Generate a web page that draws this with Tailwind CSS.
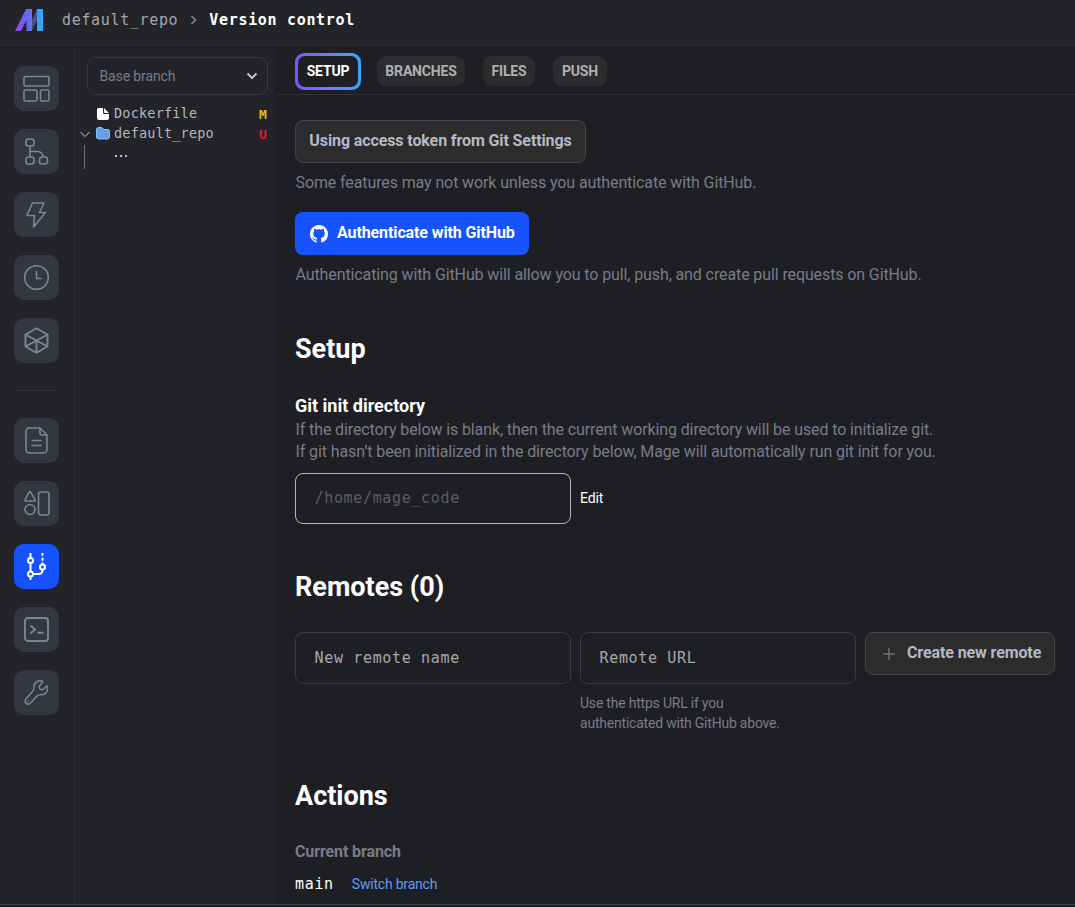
<!DOCTYPE html>
<html lang="en">
<head>
<meta charset="utf-8">
<title>Version control</title>
<script src="https://cdn.jsdelivr.net/npm/@tailwindcss/browser@4"></script>
</head>
<body class="bg-[#1e1f24] font-['Roboto',sans-serif] text-white">
<div class="flex h-[907px] w-[1075px] flex-col overflow-hidden">
  <header class="flex h-12 shrink-0 items-center border-b border-[#1b1c20] bg-[#232429] pb-[7px] pl-[15px] font-['DejaVu_Sans_Mono',monospace] text-[15px] leading-6 whitespace-nowrap">
    <svg class="h-[22px] w-[29px] shrink-0" viewBox="0 0 29 22">
      <defs><linearGradient id="logo" gradientUnits="userSpaceOnUse" x1="3" x2="26" y1="0" y2="0"><stop offset="0" stop-color="#8250ea"/><stop offset="0.4" stop-color="#7063f0"/><stop offset="1" stop-color="#2ea8fa"/></linearGradient></defs>
      <path d="M17 21 22 11V1l-5 11Z" fill="#46518c"/>
      <path d="M0 22 11 0h6v22h-5.500V11L6 22Z" fill="url(#logo)"/>
      <path d="M17 11 22 0v11l-5 10Z" fill="#46518c"/>
      <path d="M22 0h6v22h-6Z" fill="#32a5fa"/>
    </svg>
    <span class="ml-[18px] tracking-[0.66px] text-[#a5a6aa]">default_repo</span>
    <svg class="ml-[12px] h-3 w-2" viewBox="0 0 8 12" fill="none" stroke="#85868d" stroke-width="1.6"><path d="m1.500 2 4 4-4 4"/></svg>
    <span class="ml-[11px] font-bold tracking-[0.68px]">Version control</span>
  </header>

  <div class="flex min-h-0 flex-1">
    <nav class="flex w-[78px] shrink-0 flex-col gap-[18px] border-r border-[#1b1c20] bg-[#232429] pt-[18px] pl-[14px]">
      <div class="size-[45px] rounded-[10px] bg-[#35373e] p-[9px]"><svg class="size-[27px]" viewBox="0 0 27 27" fill="none" stroke="#82838f" stroke-width="1.6"><rect x="1" y="1.500" width="25" height="9.500" rx="1.500"/><rect x="1" y="15" width="13" height="11" rx="1.500"/><rect x="17.500" y="15" width="8.500" height="11" rx="1.500"/></svg></div>
      <div class="size-[45px] rounded-[10px] bg-[#35373e] p-[9px]"><svg class="size-[27px]" viewBox="0 0 27 27" fill="none" stroke="#82838f" stroke-width="1.6"><rect x="3" y="1" width="8" height="7" rx="2.500"/><rect x="3" y="19" width="8" height="7" rx="2.500"/><rect x="16.500" y="19" width="8" height="7" rx="2.500"/><path d="M7 8v11M7 13.500h8c3.500 0 4.500 2 5.500 5.500"/></svg></div>
      <div class="size-[45px] rounded-[10px] bg-[#35373e] p-[9px]"><svg class="size-[27px]" viewBox="0 0 27 27" fill="none" stroke="#82838f" stroke-width="1.6" stroke-linejoin="round"><path d="M9.500 2H21l-4.500 9.500h6L10.500 26l1-11.500H3.800Z"/></svg></div>
      <div class="size-[45px] rounded-[10px] bg-[#35373e] p-[9px]"><svg class="size-[27px]" viewBox="0 0 27 27" fill="none" stroke="#82838f" stroke-width="1.6" stroke-linecap="round"><circle cx="13.500" cy="13.500" r="11.800"/><path d="M13.500 7.500v7h4.500"/></svg></div>
      <div class="size-[45px] rounded-[10px] bg-[#35373e] p-[9px]"><svg class="size-[27px]" viewBox="0 0 27 27" fill="none" stroke="#82838f" stroke-width="1.9" stroke-linejoin="round"><path d="m13.500 1.200 11 6.300v12l-11 6.300-11-6.300v-12ZM2.500 7.500l22 12M24.500 7.500l-22 12M13.500 13.500V26"/></svg></div>
      <div class="mt-[9px] mb-[9px] h-px w-[45px] shrink-0 bg-[#303136]"></div>
      <div class="size-[45px] rounded-[10px] bg-[#35373e] p-[9px]"><svg class="size-[27px]" viewBox="0 0 27 27" fill="none" stroke="#82838f" stroke-width="1.6" stroke-linejoin="round"><path d="M17 1H6.500A3.500 3.500 0 0 0 3 4.500v18A3.500 3.500 0 0 0 6.500 26h14a3.500 3.500 0 0 0 3.500-3.500V8Zm0 0v5a2 2 0 0 0 2 2h5M8.500 13.500h10M8.500 18.500h10"/></svg></div>
      <div class="size-[45px] rounded-[10px] bg-[#35373e] p-[9px]"><svg class="size-[27px]" viewBox="0 0 27 27" fill="none" stroke="#82838f" stroke-width="1.600" stroke-linejoin="round"><path d="M6.200 2.200q.8-1.400 1.600 0l4 7.200q.6 1.600-.8 1.600H3q-1.400 0-.8-1.600Z"/><circle cx="7" cy="19.500" r="5"/><rect x="15.500" y="2" width="10.500" height="23" rx="2.500"/></svg></div>
      <div class="size-[45px] rounded-[10px] bg-[#1653ff] p-[9px]"><svg class="size-[27px]" viewBox="0 0 27 27" fill="none" stroke="#fff" stroke-width="2"><circle cx="7.500" cy="7.500" r="2.500"/><circle cx="7.500" cy="21" r="2.500"/><circle cx="19.500" cy="14" r="2.500"/><path d="M7.500 0v5M7.500 10v8.500M7.500 23.500V27M10 21h5.500q4 0 4-4.500M19.500 11.500V9.500M19.500 7.800V4.800M19.500 2.800V0"/></svg></div>
      <div class="size-[45px] rounded-[10px] bg-[#35373e] p-[9px]"><svg class="size-[27px]" viewBox="0 0 27 27" fill="none" stroke="#82838f" stroke-width="1.900"><rect x="2" y="2" width="23" height="23" rx="3"/><path d="m7.500 9.500 4.500 4-4.500 4M14.500 16.800h6"/></svg></div>
      <div class="size-[45px] rounded-[10px] bg-[#35373e] p-[9px]"><svg class="size-[27px]" viewBox="0 0 27 27" fill="none" stroke="#82838f" stroke-width="1.500" stroke-linejoin="round" stroke-linecap="round"><path d="M19.800 2.500C16 .5 10.800 3 11 8.300c.1 2.300-.5 3.200-2 4.700l-6 7c-2.600 3.500 1.300 6.800 4.500 4l6.200-6.700c1.400-1.400 2.300-1.700 4.300-1.500 5 .2 7.700-4.500 5.900-9L20 10.500c-2.200 1-4.500-1.300-3.500-3.300Z"/><path d="M5 22.300h.1"/></svg></div>
    </nav>

    <aside class="w-[199px] shrink-0 border-r border-[#1b1c20] bg-[#232429] pt-[9px]">
      <div class="ml-[9px] flex h-[38px] w-[181px] items-center justify-between rounded-[9px] border border-[#393a40] pr-[9px] pl-[11.500px] text-[14px] tracking-[-0.120px] text-[#797b86]"><span>Base branch</span>
        <svg class="h-2 w-3" viewBox="0 0 12 8" fill="none" stroke="#c0c1c6" stroke-width="2"><path d="m1.500 1.500 4.500 4.500 4.500-4.500"/></svg></div>
      <div class="mt-2 font-['DejaVu_Sans_Mono',monospace] text-[13.500px] tracking-[0.200px] text-[#b5b6ba]">
        <div class="flex h-5 items-center pr-[9px] pl-[18px]"><svg class="mt-[1px] mr-1 h-3 w-[14px]" viewBox="0 0 14 12"><path d="M2.500 0H7v4.500q0 1.500 1.500 1.500H13v4q0 2-2 2H3q-2 0-2-2V1.500Q1 0 2.500 0M8 0l5 5H9Q8 5 8 4Z" fill="#fff"/></svg><span>Dockerfile</span><span class="mt-1 ml-auto text-[13px] font-bold text-[#e3bf1c]">M</span></div>
        <div class="flex h-5 items-center pr-[9px]"><svg class="mt-[3px] mr-[7px] ml-[2px] h-[7px] w-[10px]" viewBox="0 0 10 7" fill="none" stroke="#797b86" stroke-width="1.500"><path d="m.5 1 4.500 4.500L9.500 1"/></svg><svg class="mt-px mr-1 ml-[-1px] h-[13px] w-[14px]" viewBox="0 0 14 13"><path d="M.5 2.500q0-2 2-2h3l2.500 2h4q1.500 0 1.500 2V10q0 2-2 2h-9q-2 0-2-2Z" fill="#64a0e4" stroke="#8fc0f8"/></svg><span>default_repo</span><span class="mt-1 ml-auto text-[13px] font-bold text-[#e5173c]">U</span></div>
        <div class="mt-[2px] ml-[6px] flex h-6 items-center border-l border-[#6c6d73] pl-[29px]"><svg class="mt-[-3px] h-1 w-[14px]" viewBox="0 0 14 4" fill="#dedee1"><circle cx="2" cy="2" r="1.100"/><circle cx="7" cy="2" r="1.100"/><circle cx="12" cy="2" r="1.100"/></svg></div>
      </div>
    </aside>

    <main class="min-w-0 flex-1 whitespace-nowrap">
      <div class="flex h-[47px] items-center gap-[17px] border-b border-[#2f3035] pl-[18px] text-[14px] font-bold tracking-[-0.180px] text-[#aeafb3]">
        <div class="mt-px flex h-[37px] w-[66px] rounded-[9px] bg-linear-to-r from-[#7d55ec] to-[#2ea8fa] p-[3px]"><div class="flex flex-1 items-center justify-center rounded-[7px] bg-[#1e1f24] text-white">SETUP</div></div>
        <div class="-ml-px flex h-[30px] w-[88px] items-center justify-center rounded-[9px] bg-[#2c2c2c]">BRANCHES</div>
        <div class="ml-px flex h-[30px] w-[52px] items-center justify-center rounded-[9px] bg-[#2c2c2c]">FILES</div>
        <div class="ml-px flex h-[30px] w-[54px] items-center justify-center rounded-[9px] bg-[#2c2c2c]">PUSH</div>
      </div>

      <div class="pt-[25px] pl-[18px] text-[16px] tracking-[-0.110px] text-[#797b86]">
        <div class="flex h-[43px] w-[291px] items-center justify-center rounded-[8px] border border-[#434343] bg-[#2c2c2c] pb-px font-bold text-[#b4b8c8]">Using access token from Git Settings</div>
        <p class="mt-[8px] pl-[0.500px] leading-6">Some features may not work unless you authenticate with GitHub.</p>
        <div class="mt-[17px] flex h-[43px] w-[234px] items-center rounded-[8px] bg-[#1653ff] pl-[15px] font-bold text-white">
          <svg class="mr-[9px] size-[18px]" viewBox="0 0 16 16" fill="#fff"><path d="M8 0C3.580 0 0 3.580 0 8c0 3.540 2.290 6.530 5.470 7.590.4.070.55-.17.55-.38 0-.19-.01-.82-.01-1.490-2.010.37-2.530-.49-2.690-.94-.09-.23-.48-.94-.82-1.130-.28-.15-.68-.52-.01-.53.63-.01 1.080.58 1.230.82.72 1.210 1.870.87 2.330.66.070-.52.28-.87.51-1.070-1.780-.2-3.640-.89-3.640-3.950 0-.87.31-1.590.82-2.150-.08-.2-.36-1.020.08-2.120 0 0 .67-.21 2.200.82.64-.18 1.320-.27 2-.27s1.360.09 2 .27c1.530-1.040 2.200-.82 2.200-.82.44 1.100.16 1.920.08 2.120.51.56.82 1.270.82 2.150 0 3.070-1.870 3.750-3.650 3.950.29.25.54.73.54 1.480 0 1.070-.01 1.930-.01 2.200 0 .21.15.46.55.38A8.010 8.010 0 0 0 16 8c0-4.420-3.580-8-8-8"/></svg>
          <span class="-mt-px">Authenticate with GitHub</span></div>
        <p class="mt-[8px] pl-[0.500px] leading-6">Authenticating with GitHub will allow you to pull, push, and create pull requests on GitHub.</p>

        <h1 class="mt-[44px] text-[27px] leading-9 font-bold tracking-normal text-white">Setup</h1>
        <h2 class="mt-7 text-[18px] leading-[22px] font-bold tracking-normal text-white">Git init directory</h2>
        <p class="mt-[2px] pl-[0.500px] leading-[22px]">If the directory below is blank, then the current working directory will be used to initialize git.<br>If git hasn’t been initialized in the directory below, Mage will automatically run git init for you.</p>
        <div class="mt-[10px] flex items-center gap-[9px]">
          <div class="flex h-[51px] w-[276px] items-center rounded-[8px] border border-[#b5b8c4] pl-[18.500px] font-['DejaVu_Sans_Mono',monospace] text-[15px] tracking-[0.660px] text-[#5c5d61]">/home/mage_code</div>
          <span class="text-[14px] tracking-[-0.100px] text-white">Edit</span>
        </div>

        <h1 class="mt-[45px] text-[27px] leading-9 font-bold tracking-normal text-white">Remotes (0)</h1>
        <div class="mt-[27px] flex gap-[9px]">
          <div class="flex h-[52px] w-[276px] items-center rounded-[8px] border border-[#393a40] pt-px pl-[18.500px] font-['DejaVu_Sans_Mono',monospace] text-[15px] tracking-[0.660px] text-[#a8a9ad]">New remote name</div>
          <div class="flex h-[52px] w-[276px] items-center rounded-[8px] border border-[#393a40] pt-px pl-[18.500px] font-['DejaVu_Sans_Mono',monospace] text-[15px] tracking-[0.660px] text-[#a8a9ad]">Remote URL</div>
          <div class="flex h-[43px] w-[190px] items-center rounded-[8px] border border-[#434343] bg-[#2c2c2c] pl-[17px] font-bold text-[#b4b8c8]"><svg class="mr-[12px] size-3" viewBox="0 0 12 12" stroke="#6f7074" stroke-width="1.400"><path d="M6 0v12M0 6h12"/></svg><span class="-mt-px">Create new remote</span></div>
        </div>
        <p class="mt-[9px] ml-[285px] text-[14px] leading-5 tracking-[-0.210px]">Use the https URL if you<br>authenticated with GitHub above.</p>

        <h1 class="mt-[45px] text-[27px] leading-9 font-bold tracking-normal text-white">Actions</h1>
        <div class="mt-[27px] leading-[22px] font-bold">Current branch</div>
        <div class="mt-[10px] flex h-[22px] items-center"><span class="font-['DejaVu_Sans_Mono',monospace] text-[15px] tracking-[0.660px] text-white">main</span><span class="ml-[18px] text-[14px] tracking-[-0.200px] text-[#5f9df5]">Switch branch</span></div>
      </div>
    </main>
  </div>
  <footer class="h-[3px] shrink-0 border-t border-[#3c3f40] bg-[#1b1e1e]"></footer>
</div>
</body>
</html>
